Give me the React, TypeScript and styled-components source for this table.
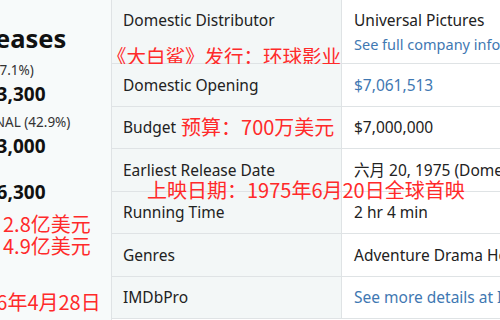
import styled, { createGlobalStyle } from "styled-components";

const GlobalStyle = createGlobalStyle`
  html, body {
    margin: 0;
    padding: 0;
    width: 500px;
    height: 320px;
    overflow: hidden;
    background: #ffffff;
  }
  body {
    font-family: "Noto Sans", "Open Sans", "Noto Sans CJK SC", sans-serif;
    color: #111;
  }
`;

const rows = [
  { label: "Domestic Opening", value: "$7,061,513", link: true },
  { label: "Budget", note: "预算：700万美元", value: "$7,000,000" },
  { label: "Earliest Release Date", value: "六月 20, 1975 (Domestic)" },
  { label: "Running Time", value: "2 hr 4 min" },
  { label: "Genres", value: "Adventure Drama Horror Thriller" },
  { label: "IMDbPro", value: "See more details at IMDbPro", link: true },
];

function App() {
  return (
    <>
      <GlobalStyle />
      <Page>
        {/* left summary column, cut off by the crop */}
        <Summary>
          <SummaryInner>
            <Heading>All Releases</Heading>
            <Share>DOMESTIC (57.1%)</Share>
            <Money>$260,753,300</Money>
            <Share>INTERNATIONAL (42.9%)</Share>
            <Money>$195,763,000</Money>
            <Share $tight>WORLDWIDE</Share>
            <Money>$456,516,300</Money>
            <Notes>
              <Note>北美票房：2.8亿美元</Note>
              <Note>全球票房：4.9亿美元</Note>
              <Note $gap>更新于2016年4月28日</Note>
            </Notes>
          </SummaryInner>
        </Summary>

        <Table>
          <Label $tall>
            Domestic Distributor
            <Annotation>《大白鲨》发行：环球影业</Annotation>
          </Label>
          <Value $tall>
            Universal Pictures
            <SubLink>See full company information</SubLink>
          </Value>

          {rows.map((r) => (
            <Row key={r.label}>
              <Label>
                {r.label}
                {r.note && <InlineNote>{r.note}</InlineNote>}
              </Label>
              <Value $link={r.link}>{r.value}</Value>
            </Row>
          ))}

          <Overlay>上映日期：1975年6月20日全球首映</Overlay>
        </Table>
      </Page>
    </>
  );
}

const Page = styled.div`
  display: flex;
  width: 500px;
  height: 320px;
  overflow: hidden;
`;

const Summary = styled.div`
  width: 111px;
  flex-shrink: 0;
  background: #f7fafa;
  border-right: 1px solid #dfe3e5;
  overflow: hidden;
`;

const SummaryInner = styled.div`
  margin-left: -84px;
  padding-top: 20px;
  white-space: nowrap;
  display: flex;
  flex-direction: column;
`;

const Heading = styled.div`
  font-size: 25.5px;
  font-weight: 700;
  line-height: 36px;
`;

const Share = styled.div<{ $tight?: boolean }>`
  font-size: 13.5px;
  line-height: 20px;
  color: #333;
  margin-top: ${(p) => (p.$tight ? "-2px" : "4px")};
`;

const Money = styled.div`
  margin-left: 10px;
  font-size: 19px;
  font-weight: 700;
  line-height: 28px;
`;

const Notes = styled.div`
  margin: 7px 0 0 -13px;
  display: flex;
  flex-direction: column;
`;

const Note = styled.div<{ $gap?: boolean }>`
  font-family: "Noto Sans CJK SC", sans-serif;
  font-size: 20px;
  line-height: 22px;
  color: #ff2a2a;
  margin-top: ${(p) => (p.$gap ? "34px" : "0")};
`;

const Table = styled.div`
  position: relative;
  flex: 1;
  display: grid;
  grid-template-columns: 230px 1fr;
  grid-auto-rows: min-content;
  overflow: hidden;
`;

const Row = styled.div`
  display: contents;
`;

const Label = styled.div<{ $tall?: boolean }>`
  height: ${(p) => (p.$tall ? "53px" : "41.5px")};
  padding: ${(p) => (p.$tall ? "10px 0 0 11px" : "0 0 0 11px")};
  display: flex;
  flex-direction: ${(p) => (p.$tall ? "column" : "row")};
  align-items: ${(p) => (p.$tall ? "flex-start" : "center")};
  background: #f3f7f7;
  border-right: 1px solid #dfe3e5;
  border-bottom: 1px solid #dfe3e5;
  font-size: 15.5px;
  line-height: 20px;
  color: #222;
  white-space: nowrap;
`;

const Value = styled.div<{ $tall?: boolean; $link?: boolean }>`
  height: ${(p) => (p.$tall ? "53px" : "41.5px")};
  padding: ${(p) => (p.$tall ? "10px 0 0 12px" : "0 0 0 12px")};
  display: flex;
  flex-direction: ${(p) => (p.$tall ? "column" : "row")};
  align-items: ${(p) => (p.$tall ? "flex-start" : "center")};
  background: #ffffff;
  border-bottom: 1px solid #dfe3e5;
  font-size: 15.5px;
  line-height: 20px;
  color: ${(p) => (p.$link ? "#3f78b2" : "#222")};
  white-space: nowrap;
  overflow: hidden;
`;

const SubLink = styled.span`
  font-size: 14.5px;
  line-height: 22px;
  margin-top: 3px;
  color: #3f78b2;
`;

const Annotation = styled.span`
  font-family: "Noto Sans CJK SC", sans-serif;
  font-size: 19.5px;
  line-height: 24px;
  margin: 14px 0 0 -16px;
  color: #ff2a2a;
`;

const InlineNote = styled.span`
  font-family: "Noto Sans CJK SC", sans-serif;
  font-size: 20px;
  color: #ff2a2a;
  margin-left: 5px;
`;

const Overlay = styled.div`
  position: absolute;
  left: 35px;
  top: 178px;
  font-family: "Noto Sans CJK SC", sans-serif;
  font-size: 20px;
  line-height: 24px;
  color: #ff2a2a;
  white-space: nowrap;
`;

export default App;
